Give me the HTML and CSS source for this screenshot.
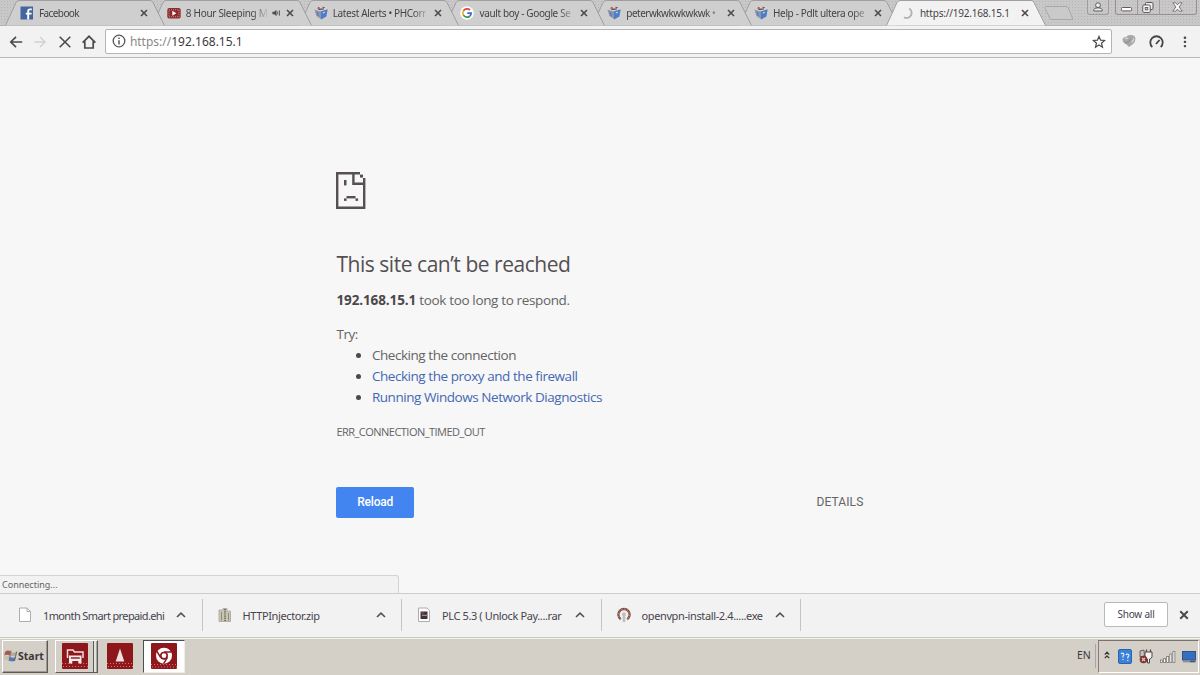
FILE: index.html
```html
<!DOCTYPE html>
<html lang="en">

<head>
    <meta charset="UTF-8">
    <meta name="viewport" content="width=device-width, initial-scale=1.0">
    <title>192.168.15.1</title>

    <link rel="stylesheet" href="styles.css">
</head>

<body>
    <!-- shared icons -->
    <svg class="defs" width="0" height="0">
        <symbol id="tab-shape" viewBox="0 0 160 26">
            <path d="M0.5 25.5 L11 2.5 Q12 0.5 14 0.5 H145 Q147 0.5 148 2.5 L159.5 25.5" />
        </symbol>
        <symbol id="close" viewBox="0 0 8 8">
            <path d="M1 1 L7 7 M7 1 L1 7" fill="none" stroke="#4c4a4c" stroke-width="1.6" />
        </symbol>
        <symbol id="phc" viewBox="0 0 14 14">
            <path d="M0.5 3.5 L4 1 L11 0.8 L13.7 3.2 L7 6 Z" fill="#d8d0d0" />
            <path d="M0.5 3.5 L6.2 5.6 L7.2 13.2 L2.4 10 Z" fill="#8f95a6" />
            <path d="M6.2 5.6 L13.7 3.2 L12.4 10.6 L7.2 13.5 Z" fill="#4f7cc6" />
            <path d="M2.6 2.6 L5 0.8 L6.2 2.4 Z M8 0.8 L11.3 1.2 L9.4 2.8 Z" fill="#a5443a" />
            <path d="M2.4 5.6 L4 6.2 L5 10.2 L3.4 9.2 Z" fill="#4f7cc6" />
            <path d="M4.4 3.4 L9.6 3" stroke="#453b40" stroke-width="1.1" />
            <path d="M8.8 7 L10.8 6.2" stroke="#cfdcf0" stroke-width="1.2" />
        </symbol>
        <symbol id="chevron" viewBox="0 0 10 6">
            <path d="M1 5 L5 1.2 L9 5" fill="none" stroke="#55504f" stroke-width="1.6" />
        </symbol>
    </svg>

    <div class="tabs">
        <div class="tab">
            <svg class="shape"><use href="#tab-shape" /></svg>
            <svg class="favicon" viewBox="0 0 14 14">
                <rect x="0.5" y="0.5" width="12.5" height="13" fill="#45659f" />
                <path d="M8.2 13.5 V5.2 Q8.2 3.4 10 3.4 H11.8 M5.8 7.6 H11.6" fill="none" stroke="#fff" stroke-width="1.9" />
            </svg>
            <span class="title short">Facebook</span>
            <svg class="close"><use href="#close" /></svg>
        </div>
        <div class="tab">
            <svg class="shape"><use href="#tab-shape" /></svg>
            <svg class="favicon" viewBox="0 0 14 14">
                <rect x="0.3" y="2" width="13.4" height="10.5" rx="2" fill="#8d2a2c" />
                <rect x="2" y="3.8" width="10" height="7" fill="none" stroke="#c99" stroke-width="0.9" stroke-dasharray="1 1" />
                <path d="M5.3 4.8 L9.3 7.2 L5.3 9.8 Z" fill="#fff" />
            </svg>
            <span class="title playing">8 Hour Sleeping M</span>
            <svg class="audio" viewBox="0 0 10 8">
                <path d="M0.5 2.7 H2.5 L5 0.5 V7.5 L2.5 5.3 H0.5 Z" fill="#4c4a4c" />
                <path d="M6.4 2.2 V5.8 M8.3 1 V7" stroke="#4c4a4c" stroke-width="0.9" />
            </svg>
            <svg class="close"><use href="#close" /></svg>
        </div>
        <div class="tab">
            <svg class="shape"><use href="#tab-shape" /></svg>
            <svg class="favicon"><use href="#phc" /></svg>
            <span class="title">Latest Alerts • PHCorr</span>
            <svg class="close"><use href="#close" /></svg>
        </div>
        <div class="tab">
            <svg class="shape"><use href="#tab-shape" /></svg>
            <svg class="favicon" viewBox="0 0 14 14">
                <circle cx="7" cy="7" r="6.8" fill="#fff" />
                <g fill="none" stroke-width="1.8">
                    <path d="M10 4 A4.2 4.2 0 0 0 3.4 4.9" stroke="#dc4a3d" />
                    <path d="M3.4 4.9 A4.2 4.2 0 0 0 3.4 9.1" stroke="#edb526" />
                    <path d="M3.4 9.1 A4.2 4.2 0 0 0 9.7 10.2" stroke="#3a9a55" />
                    <path d="M9.7 10.2 Q11.2 9 11.2 7.1 H7.2" stroke="#4072d6" />
                </g>
            </svg>
            <span class="title">vault boy - Google Se</span>
            <svg class="close"><use href="#close" /></svg>
        </div>
        <div class="tab">
            <svg class="shape"><use href="#tab-shape" /></svg>
            <svg class="favicon"><use href="#phc" /></svg>
            <span class="title narrow">peterwkwkwkwkwk •</span>
            <svg class="close"><use href="#close" /></svg>
        </div>
        <div class="tab">
            <svg class="shape"><use href="#tab-shape" /></svg>
            <svg class="favicon"><use href="#phc" /></svg>
            <span class="title">Help - Pdlt ultera ope</span>
            <svg class="close"><use href="#close" /></svg>
        </div>
        <div class="tab active">
            <svg class="shape"><use href="#tab-shape" /></svg>
            <svg class="favicon" viewBox="0 0 14 14">
                <path d="M8.2 2.6 A5 5 0 1 1 3 11.2" fill="none" stroke="#b3b1b1" stroke-width="1.8" />
            </svg>
            <span class="title">https://192.168.15.1</span>
            <svg class="close"><use href="#close" /></svg>
        </div>
        <svg class="new-tab" viewBox="0 0 32 16">
            <path d="M3 1.5 H23 Q24.5 1.5 25.2 3 L30 14.5 H9 Q7.5 14.5 6.8 13 L2 3 Q1.5 1.5 3 1.5 Z" fill="#cbcaca" stroke="#aaa8a8" />
        </svg>
        <div class="window-buttons">
            <div class="user">
                <svg width="10" height="10" viewBox="0 0 10 10">
                    <path d="M0.8 9 V7.6 Q1 5.8 5 5.8 Q9 5.8 9.2 7.6 V9 Z" fill="#eee" stroke="#5f5a5a" />
                    <circle cx="5" cy="3.2" r="2.4" fill="#eee" stroke="#5f5a5a" />
                </svg>
            </div>
            <div class="group">
                <div class="min"><svg width="11" height="5" viewBox="0 0 11 5"><rect x="0.5" y="0.5" width="10" height="3.4" rx="1" fill="#fff" stroke="#625b5b" /></svg></div>
                <div class="max">
                    <svg width="12" height="11" viewBox="0 0 12 11">
                        <rect x="3.5" y="0.5" width="7.5" height="7" rx="1" fill="#eee" stroke="#5c5555" />
                        <rect x="0.8" y="3" width="7.4" height="7.4" rx="1" fill="#fff" stroke="#5c5555" />
                        <rect x="3.2" y="5.5" width="2.6" height="2.4" fill="#ccc" stroke="#5c5555" stroke-width="0.9" />
                    </svg>
                </div>
                <div class="quit">
                    <svg width="11" height="10" viewBox="0 0 11 10">
                        <path d="M0.8 0.8 H3.8 L5.5 2.8 L7.2 0.8 H10.2 L7.2 5 L10.2 9.2 H7.2 L5.5 7.2 L3.8 9.2 H0.8 L3.8 5 Z" fill="#f4f4f4" stroke="#736c6c" stroke-width="0.9" />
                    </svg>
                </div>
            </div>
        </div>
    </div>

    <div class="toolbar">
        <svg class="nav" viewBox="0 0 14 14"><path d="M13.2 7 H2 M7 1.8 L1.8 7 L7 12.2" fill="none" stroke="#4e4a4b" stroke-width="1.7" /></svg>
        <svg class="nav" viewBox="0 0 14 14"><path d="M1.5 7 H12 M7 2 L12 7 L7 12" fill="none" stroke="#d2d0d0" stroke-width="1.4" /></svg>
        <svg class="nav" viewBox="0 0 14 14"><path d="M1.7 1.7 L12.3 12.3 M12.3 1.7 L1.7 12.3" fill="none" stroke="#4e4a4b" stroke-width="1.6" /></svg>
        <svg class="nav" viewBox="0 0 14 14"><path d="M0.6 7.6 L7 1.3 L13.4 7.6 M2.8 6.2 V13 H11.2 V6.2" fill="none" stroke="#4e4a4b" stroke-width="1.7" /></svg>
        <div class="omnibox">
            <svg class="info" viewBox="0 0 14 14">
                <circle cx="7" cy="7" r="5.8" fill="none" stroke="#5b5758" stroke-width="1.3" />
                <path d="M7 6.2 V10.4 M7 3.5 V5" stroke="#5b5758" stroke-width="1.5" />
            </svg>
            <span class="url"><span class="scheme">https://</span>192.168.15.1</span>
            <svg class="star" viewBox="0 0 14 14"><path d="M7 1.4 L8.6 5.2 L12.6 5.5 L9.5 8.2 L10.5 12.2 L7 10 L3.5 12.2 L4.5 8.2 L1.4 5.5 L5.4 5.2 Z" fill="none" stroke="#4e4a4b" stroke-width="1.2" /></svg>
        </div>
        <svg class="ext globe" viewBox="0 0 14 14">
            <path d="M0.5 5.5 Q1 2.5 4 3 Q6 0.5 9 1 Q13 1 13.5 4.5 Q13.5 8 11 10 L7 13 L4.5 10.5 Q0.8 9.5 0.5 5.5 Z" fill="#aaa8a7" />
            <path d="M3 5 Q5 3.5 6 5 M9.5 8.5 Q11.5 7 12 4.5" fill="none" stroke="#d4d3d2" stroke-width="1.3" />
            <path d="M3.5 8.5 Q7 9.5 8.5 5" fill="none" stroke="#8a8888" />
        </svg>
        <svg class="ext gauge" viewBox="0 0 15 14">
            <path d="M3.3 12 A6.2 6.2 0 1 1 11.7 12" fill="none" stroke="#484445" stroke-width="1.8" />
            <path d="M7 9 L10.5 5" stroke="#484445" stroke-width="1.8" />
        </svg>
        <svg class="ext dots" viewBox="0 0 4 12">
            <g fill="#4e4a4b">
                <rect x="0.8" y="0.6" width="2.3" height="2.3" rx="0.7" />
                <rect x="0.8" y="4.8" width="2.3" height="2.3" rx="0.7" />
                <rect x="0.8" y="9" width="2.3" height="2.3" rx="0.7" />
            </g>
        </svg>
    </div>

    <div class="page">
        <svg class="sad" viewBox="0 0 30 37">
            <g fill="#575051">
                <path d="M0 0 H24 V2.4 H2.4 V34.6 H27 V6 H29.4 V37 H0 Z" />
                <path d="M16.2 0 H18.6 V10.6 H29 V13 H16.2 Z" />
                <rect x="24" y="2.6" width="3" height="3" />
                <rect x="8" y="8" width="2.5" height="5.4" />
                <rect x="10.5" y="24" width="9" height="2.4" />
                <rect x="8" y="26.4" width="2.6" height="2.5" />
                <rect x="19.5" y="26.4" width="2.6" height="2.5" />
            </g>
        </svg>
        <h1>This site can’t be reached</h1>
        <p class="summary"><strong>192.168.15.1</strong> took too long to respond.</p>
        <p class="try">Try:</p>
        <ul>
            <li>Checking the connection</li>
            <li><a href="#">Checking the proxy and the firewall</a></li>
            <li><a href="#">Running Windows Network Diagnostics</a></li>
        </ul>
        <p class="code">ERR_CONNECTION_TIMED_OUT</p>
        <div class="buttons">
            <button class="reload">Reload</button>
            <span class="details">DETAILS</span>
        </div>
        <div class="status">Connecting...</div>
    </div>

    <div class="shelf">
        <div class="item">
            <svg class="file" viewBox="0 0 14 16"><path d="M1.5 1 H9 L12.5 4.5 V14.5 H1.5 Z" fill="#fff" stroke="#aeacac" /><path d="M9 1 V4.5 H12.5" fill="none" stroke="#aeacac" /></svg>
            <span class="name tight">1month Smart prepaid.ehi</span>
            <svg class="chevron"><use href="#chevron" /></svg>
        </div>
        <div class="item">
            <svg class="file" viewBox="0 0 14 16">
                <path d="M1 3 H5 V1.5 H9 V4 H12.5 V14.5 H1 Z" fill="#c9c5b4" stroke="#aaa69b" stroke-width="0.8" />
                <path d="M3.5 5 V13.5 M10.5 6 V13.5" stroke="#8f8b7e" />
                <path d="M7 2 V14" stroke="#77705d" stroke-width="2" stroke-dasharray="1.2 1" />
            </svg>
            <span class="name">HTTPInjector.zip</span>
            <svg class="chevron"><use href="#chevron" /></svg>
        </div>
        <div class="item">
            <svg class="file" viewBox="0 0 14 16">
                <path d="M1.5 1 H10 L12.5 3.5 V14.5 H1.5 Z" fill="#fff" stroke="#aeacac" />
                <rect x="3.5" y="4.5" width="7" height="7.5" fill="#3c3538" />
                <path d="M4 6 H7" stroke="#a33c3c" stroke-width="1.3" />
                <path d="M5 8.3 H10" stroke="#aaa" />
            </svg>
            <span class="name">PLC 5.3 ( Unlock Pay....rar</span>
            <svg class="chevron"><use href="#chevron" /></svg>
        </div>
        <div class="item">
            <svg class="file" viewBox="0 0 14 16">
                <path d="M3.8 12.2 A5.6 5.6 0 1 1 10.2 12.2" fill="none" stroke="#805248" stroke-width="2.3" />
                <path d="M3.8 12.2 A5.6 5.6 0 1 1 10.2 12.2" fill="none" stroke="#d5a28e" stroke-width="0.9" stroke-dasharray="1.2 1.6" />
                <circle cx="7" cy="7.3" r="2" fill="#bdbfc2" />
                <path d="M7 8 V15" stroke="#bdbfc2" stroke-width="2.6" />
            </svg>
            <span class="name">openvpn-install-2.4.....exe</span>
            <svg class="chevron"><use href="#chevron" /></svg>
        </div>
        <button class="show-all">Show all</button>
        <svg class="shelf-close" viewBox="0 0 8 8"><use href="#close" /></svg>
    </div>

    <div class="taskbar">
        <div class="start">
            <svg viewBox="0 0 14 13">
                <path d="M1 3 Q4 0.5 6.5 2.5 L5.5 6.5 Q3 5 0.3 6.5 Z" fill="#a45a4c" />
                <path d="M7.5 3 Q10 4.5 13 2.5 L12 6.5 Q9 8 6.5 6.5 Z" fill="#b9aa9c" />
                <path d="M0.5 7.5 Q3 6 5.3 7.5 L4.4 11 Q2 10 0 11 Z" fill="#c6beb2" />
                <path d="M6.4 7.8 Q9 9.5 11.7 7.8 L10.5 12 Q8 13 5.3 11.5 Z" fill="#4e7cba" />
                <path d="M7 1.5 L5 12 M12.7 2.5 L10.5 12" stroke="#6a5147" stroke-width="0.8" />
            </svg>
            <span>Start</span>
        </div>
        <div class="task raised">
            <svg viewBox="0 0 26 26">
                <rect width="26" height="26" rx="1" fill="#8e171c" />
                <path d="M0 20.5 H26 M1 23.5 H26" stroke="#c9777a" stroke-dasharray="1 2" />
                <path d="M5.5 15 V7 H11 L12.5 9 H21 V15" fill="none" stroke="#f1dede" stroke-width="1.5" />
                <rect x="7" y="12.5" width="12.5" height="8" fill="#f7eaea" />
                <rect x="8.8" y="14.3" width="9" height="1.4" fill="#8e171c" />
                <rect x="10.3" y="18" width="6" height="3" fill="#8e171c" />
            </svg>
        </div>
        <div class="task">
            <svg viewBox="0 0 26 26">
                <rect width="26" height="26" rx="1" fill="#8e171c" />
                <path d="M0 20.5 H26 M1 23.5 H26" stroke="#c9777a" stroke-dasharray="1 2" />
                <path d="M13 5.5 L17.3 18.5 H8.7 Z" fill="#eee1df" />
            </svg>
        </div>
        <div class="task current">
            <svg viewBox="0 0 26 26">
                <rect width="26" height="26" rx="1" fill="#8e171c" />
                <path d="M0 21.5 H26 M1 24 H26" stroke="#c9777a" stroke-dasharray="1 2" />
                <circle cx="13" cy="12.7" r="8" fill="#fff" />
                <circle cx="13" cy="12.7" r="3.2" fill="#fff" stroke="#8e171c" stroke-width="1.6" />
                <path d="M13 8.9 H20.6 M9.7 14.6 L6 8.3 M16.3 14.6 L12.6 20.7" stroke="#8e171c" stroke-width="1.5" />
            </svg>
        </div>
        <span class="lang">EN</span>
        <div class="tray">
            <svg class="up" viewBox="0 0 6 8"><path d="M0.8 3.6 L3 1.2 L5.2 3.6 M0.8 7.2 L3 4.8 L5.2 7.2" fill="none" stroke="#333" stroke-width="1.2" /></svg>
            <svg class="help" viewBox="0 0 14 15">
                <rect x="0.5" y="0.5" width="13" height="14" rx="1.5" fill="#3b81d8" stroke="#2c62ac" />
                <path d="M3 5 Q4 3.5 5.5 4.5 Q6.5 6 5 7 V8.5 M5 10 V11 M8 6 Q9 4.5 10.5 5.5 Q11.5 7 9.8 8 V9.5 M9.8 11 V12" fill="none" stroke="#e2effc" stroke-width="1.2" />
            </svg>
            <svg class="plug" viewBox="0 0 14 15">
                <path d="M6 3 H13 V8 Q12 10 10.5 10 V14 H8.5 V10 Q6 9 6 7 Z" fill="#f5f2ef" stroke="#4d4848" />
                <path d="M7.5 0.5 V3 M11.5 0.5 V3" stroke="#4d4848" stroke-width="1.2" />
                <path d="M1 2 L5 1 L5.5 7 L1 8 Z" fill="#c7c2ba" stroke="#4d4848" stroke-width="0.8" />
                <circle cx="4.5" cy="10.5" r="3.8" fill="#7d3333" />
                <path d="M3 9 L6 12 M6 9 L3 12" stroke="#e8c5c0" stroke-width="1.2" />
            </svg>
            <svg class="signal" viewBox="0 0 16 12">
                <g fill="#fff" stroke="#77736f" stroke-width="0.8">
                    <rect x="0.5" y="9" width="2" height="2.5" />
                    <rect x="3.6" y="7.5" width="2" height="4" />
                    <rect x="6.7" y="5.5" width="2" height="6" />
                    <rect x="9.8" y="3" width="2" height="8.5" />
                    <rect x="12.9" y="0.6" width="2" height="10.9" />
                </g>
            </svg>
            <svg class="monitor" viewBox="0 0 14 12">
                <rect x="0.5" y="0.5" width="13" height="8.5" fill="#346fc0" stroke="#35517c" />
                <path d="M1 10.5 H8" stroke="#868a90" stroke-width="1.6" />
                <path d="M8 10.5 H13.5" stroke="#35517c" stroke-width="1.6" />
            </svg>
        </div>
    </div>
</body>

</html>
```

FILE: styles.css
```css
* {
    box-sizing: border-box;
}

body {
    display: flex;
    flex-direction: column;
    width: 1200px;
    height: 675px;
    margin: 0;
    overflow: hidden;
    background-color: #f7f7f7;
    color: #646464;
    font-family: "Open Sans", "Noto Sans", sans-serif;
}

svg {
    display: block;
    flex: none;
}

.defs {
    position: absolute;
}

/* tab strip */
.tabs {
    display: flex;
    height: 26px;
    padding-left: 5px;
    background-color: #c9c8c8;
    background-image: radial-gradient(#b7b6b6 0.7px, transparent 0.9px);
    background-size: 3px 3px;
    border-bottom: 1px solid #b4b2b2;
}

.tab {
    position: relative;
    display: flex;
    align-items: center;
    flex: none;
    width: 160px;
    height: 26px;
    margin-right: -13.2px;
    padding-left: 15px;
}

.tab:nth-child(1) { z-index: 7; }
.tab:nth-child(2) { z-index: 6; }
.tab:nth-child(3) { z-index: 5; }
.tab:nth-child(4) { z-index: 4; }
.tab:nth-child(5) { z-index: 3; }
.tab:nth-child(6) { z-index: 2; }
.tab.active { z-index: 8; }

.shape {
    position: absolute;
    top: 0;
    left: 0;
    width: 160px;
    height: 26px;
    fill: #d0cfcf;
    stroke: #a09e9e;
}

.active .shape {
    fill: #f2f2f2;
}

.favicon {
    position: relative;
    width: 14px;
    height: 14px;
}

.title {
    position: relative;
    flex: none;
    width: 93px;
    margin: -1px 0 0 5px;
    color: #464246;
    font-family: "Noto Sans", sans-serif;
    font-size: 10px;
    line-height: 16px;
    letter-spacing: -0.36px;
    white-space: nowrap;
    -webkit-mask-image: linear-gradient(to right, #000 80px, transparent 97px);
    mask-image: linear-gradient(to right, #000 80px, transparent 97px);
}

.title.short {
    letter-spacing: -0.6px;
}

.title.narrow {
    letter-spacing: -0.5px;
}

.title.playing {
    width: 81px;
    margin-right: 5px;
    letter-spacing: -0.3px;
    -webkit-mask-image: linear-gradient(to right, #000 67px, transparent 83px);
    mask-image: linear-gradient(to right, #000 67px, transparent 83px);
}

.audio {
    position: relative;
    width: 9px;
    height: 8px;
}

.close {
    position: relative;
    width: 8px;
    height: 8px;
    margin-left: 8px;
}

.playing ~ .close {
    margin-left: 5px;
}

.active .title {
    letter-spacing: -0.2px;
    -webkit-mask-image: none;
    mask-image: none;
}

.new-tab {
    width: 32px;
    height: 16px;
    margin: 5px 0 0 10px;
}

.window-buttons {
    display: flex;
    margin-left: 12px;
}

.user,
.group {
    display: flex;
    height: 15px;
    border: 1px solid #a19a9a;
    border-top: 0;
    border-radius: 0 0 3px 3px;
}

.user {
    width: 22px;
    align-items: center;
    justify-content: center;
}

.group {
    width: 82px;
    margin-left: 6px;
    border-color: #9c8f8f;
}

.group div {
    display: flex;
    align-items: center;
    justify-content: center;
}

.min {
    width: 22px;
    padding-top: 5px;
    border-right: 1px solid #a49a9a;
}

.max {
    width: 22px;
    border-right: 1px solid #a49a9a;
}

.quit {
    width: 36px;
}

/* toolbar */
.toolbar {
    display: flex;
    align-items: center;
    height: 32px;
    padding: 0 0 1px 8.5px;
    background-color: #f2f2f2;
    border-bottom: 1px solid #b5b8b8;
}

.nav {
    width: 14px;
    height: 14px;
    margin: 1px 10.6px 0 0;
}

.omnibox {
    display: flex;
    align-items: center;
    width: 1007px;
    height: 25px;
    margin-left: -2px;
    padding: 0 5px 0 6px;
    background-color: #fff;
    border: 1px solid #b2b5b5;
    border-radius: 2px;
}

.info,
.star {
    width: 14px;
    height: 14px;
}

.star {
    margin-top: 1px;
}

.url {
    flex: 1;
    margin: 1px 0 0 4px;
    color: #3e3a3d;
    font-family: "Noto Sans", sans-serif;
    font-size: 12px;
    line-height: 18px;
}

.scheme {
    color: #8b8888;
}

.globe {
    width: 14px;
    height: 14px;
    margin-left: 10px;
}

.gauge {
    width: 15px;
    height: 14px;
    margin: 1px 0 0 13px;
}

.dots {
    width: 4px;
    height: 12px;
    margin: 1px 0 0 19px;
}

/* error page */
.page {
    position: relative;
    height: 535px;
    padding: 114px 0 0 336.4px;
    font-size: 13.5px;
    letter-spacing: -0.45px;
}

.sad {
    width: 30px;
    height: 37px;
}

h1 {
    margin: 41px 0 0;
    color: #545052;
    font-size: 21px;
    font-weight: 400;
    line-height: 28px;
    letter-spacing: -0.46px;
}

p {
    margin: 0;
}

.summary {
    margin-top: 12px;
    line-height: 20px;
    letter-spacing: -0.36px;
}

strong {
    color: #4b474a;
    letter-spacing: -0.1px;
}

.try {
    margin-top: 14px;
    line-height: 21px;
}

ul {
    margin: 0;
    padding-left: 35.5px;
}

li {
    line-height: 21.1px;
}

li::marker {
    color: #4c494a;
}

a {
    color: #4468b4;
    text-decoration: none;
}

.code {
    margin-top: 14px;
    font-size: 11px;
    line-height: 20px;
    letter-spacing: -0.52px;
}

.buttons {
    display: flex;
    align-items: center;
    justify-content: space-between;
    width: 527px;
    margin-top: 45px;
}

.reload {
    width: 77.5px;
    height: 31px;
    padding: 0 0 1px;
    border: 0;
    border-radius: 2px;
    background-color: #4285f0;
    color: #fff;
    font-family: Roboto, sans-serif;
    font-size: 12px;
    font-weight: 500;
    letter-spacing: -0.2px;
}

.details {
    padding-bottom: 1px;
    font-family: Roboto, sans-serif;
    font-size: 12px;
    letter-spacing: 0.1px;
}

.status {
    position: absolute;
    bottom: 0;
    left: 0;
    width: 399px;
    height: 18px;
    padding-left: 2px;
    background-color: #f2f2f2;
    border: 1px solid #d4d4d4;
    border-width: 1px 1px 0 0;
    border-top-right-radius: 3px;
    font-family: "Noto Sans", sans-serif;
    font-size: 9px;
    line-height: 18px;
    letter-spacing: 0;
}

/* downloads */
.shelf {
    display: flex;
    align-items: center;
    height: 45px;
    padding: 0 0 2px 3px;
    background-color: #f2f2f2;
    border-top: 1px solid #cdcdcd;
    border-bottom: 1px solid #c9c7c3;
}

.item {
    display: flex;
    align-items: center;
    width: 199.5px;
    height: 32px;
    padding-left: 15px;
    border-right: 1px solid #c4c4c4;
}

.file {
    width: 14px;
    height: 16px;
}

.name {
    width: 133px;
    margin: 3px 0 0 11px;
    color: #47444c;
    font-family: "Noto Sans", sans-serif;
    font-size: 11px;
    line-height: 16px;
    letter-spacing: -0.38px;
    white-space: nowrap;
}

.name.tight {
    letter-spacing: -0.62px;
}

.chevron {
    width: 10px;
    height: 6px;
}

.show-all {
    width: 64px;
    height: 25px;
    margin-left: 303px;
    padding: 0 0 1px;
    background-color: #fff;
    border: 1px solid #b9b9b9;
    border-radius: 2px;
    color: #47444c;
    font-family: "Noto Sans", sans-serif;
    font-size: 10px;
    letter-spacing: -0.2px;
}

.shelf-close {
    width: 10px;
    height: 10px;
    margin-left: 11px;
}

/* taskbar */
.taskbar {
    display: flex;
    height: 37px;
    padding-top: 1px;
    background-color: #d4cfc7;
    border-top: 1px solid #f4f2ee;
}

.start {
    display: flex;
    align-items: center;
    width: 46px;
    height: 33px;
    margin-left: 2px;
    padding: 0 0 2px 1px;
    border: 1px solid;
    border-color: #fff #5d5956 #5d5956 #fff;
    box-shadow: inset -1px -1px #9d9892;
    color: #3b3839;
    font-family: "Noto Sans", sans-serif;
    font-size: 10.5px;
    font-weight: 700;
}

.start svg {
    width: 14px;
    height: 13px;
}

.task {
    display: flex;
    align-items: center;
    justify-content: center;
    width: 42px;
    height: 33px;
    padding-bottom: 1px;
}

.task svg {
    width: 26px;
    height: 26px;
}

.raised {
    width: 43px;
    margin-left: 7px;
    padding-right: 4px;
    border: 1px solid;
    border-color: #fff #5d5a60 #5d5a60 #fff;
    box-shadow: inset -1px 0 #aaa6a4, inset -3px 0 #e5e1db, inset -4px 0 #5d5a60;
}

.raised + .task {
    margin-left: 1px;
}

.current {
    margin-left: 2px;
    background-color: #fff;
    border: 1px solid;
    border-color: #4f4b58 #eee #eee #4f4b58;
}

.lang {
    width: 19px;
    height: 24px;
    margin: 4px 0 0 auto;
    border-right: 1px solid #aaa6a0;
    color: #3d393c;
    font-family: "Noto Sans", sans-serif;
    font-size: 10.5px;
    line-height: 22px;
}

.tray {
    display: flex;
    align-items: center;
    width: 101px;
    height: 33px;
    margin: 0 1px 0 2px;
    padding-left: 5px;
    overflow: hidden;
    border: 1px solid;
    border-color: #7d7070 #fff #fff #8f7878;
}

.up {
    width: 6px;
    height: 8px;
    margin-top: -3px;
}

.help {
    width: 14px;
    height: 15px;
    margin-left: 8px;
}

.plug {
    width: 14px;
    height: 15px;
    margin-left: 7px;
}

.signal {
    width: 16px;
    height: 12px;
    margin-left: 7px;
}

.monitor {
    width: 14px;
    height: 12px;
    margin-left: 6px;
}
```
